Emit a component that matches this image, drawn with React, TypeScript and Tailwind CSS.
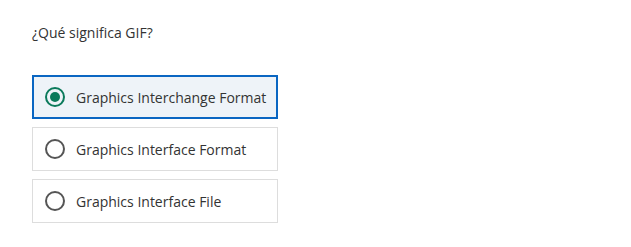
import React, { useState } from 'react';

const options = [
  'Graphics Interchange Format',
  'Graphics Interface Format',
  'Graphics Interface File',
];

const Radio: React.FC<{ checked: boolean }> = ({ checked }) => (
  <span
    className={`flex items-center justify-center w-[20px] h-[20px] rounded-full border-2 shrink-0 ${
      checked ? 'border-[#0b7a5b]' : 'border-[#555]'
    }`}
  >
    {checked && <span className="w-[10px] h-[10px] rounded-full bg-[#0b7a5b]" />}
  </span>
);

const App: React.FC = () => {
  const [selected, setSelected] = useState(0);

  return (
    <div className="w-[631px] h-[247px] bg-white px-[32px] pt-[23px] font-['Open_Sans',sans-serif] text-[#333]">
      <p className="text-[14px] leading-[20px]">¿Qué significa GIF?</p>
      <div className="mt-[32px] flex flex-col gap-[8px] w-[246px]">
        {options.map((opt, i) => {
          const checked = i === selected;
          return (
            <button
              key={opt}
              onClick={() => setSelected(i)}
              className={`flex items-center gap-[11px] h-[44px] px-[12px] text-left text-[14px] whitespace-nowrap ${
                checked
                  ? 'border-2 border-[#0a66c2] bg-[#eef3f8] pl-[11px]'
                  : 'border border-[#dddddd] bg-white'
              }`}
            >
              <Radio checked={checked} />
              <span>{opt}</span>
            </button>
          );
        })}
      </div>
    </div>
  );
};

export default App;
